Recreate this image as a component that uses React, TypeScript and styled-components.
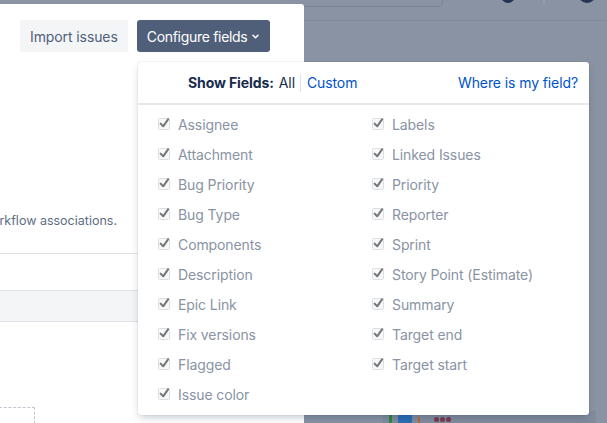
import React from "react";
import styled, { createGlobalStyle } from "styled-components";

const GlobalStyle = createGlobalStyle`
  html, body { margin: 0; padding: 0; }
  body {
    background: #8993a4;
    font-family: Inter, "Noto Sans", "Liberation Sans", sans-serif;
    -webkit-font-smoothing: antialiased;
  }
`;

const Page = styled.div`
  position: relative;
  width: 607px;
  height: 423px;
  overflow: hidden;
  display: grid;
  grid-template-columns: 304px 1fr;
  background: #8993a4;
`;

const LeftPanel = styled.section`
  margin-top: 4px;
  background: #ffffff;
  border-top-right-radius: 3px;
  display: flex;
  flex-direction: column;
  overflow: hidden;
  & > * {
    flex-shrink: 0;
  }
`;

const Toolbar = styled.div`
  display: flex;
  gap: 9px;
  padding: 16px 0 0 20px;
`;

const Button = styled.button<{ $primary?: boolean }>`
  height: 32px;
  padding: 0 10px;
  border: none;
  border-radius: 3px;
  display: inline-flex;
  align-items: center;
  gap: 4px;
  font-family: inherit;
  font-size: 14px;
  letter-spacing: ${(p) => (p.$primary ? "-0.3px" : "-0.1px")};
  background: ${(p) => (p.$primary ? "#505f79" : "#f4f5f7")};
  color: ${(p) => (p.$primary ? "#ffffff" : "#505f79")};
`;

const Description = styled.p`
  margin: 161px 0 0 0;
  width: 117px;
  display: flex;
  justify-content: flex-end;
  font-size: 12.5px;
  line-height: 16px;
  color: #5e6c84;
  white-space: nowrap;
`;

const Divider = styled.div`
  margin-top: 24px;
  height: 1px;
  background: #dfe1e6;
`;

const Spacer = styled.div<{ $h: number }>`
  height: ${(p) => p.$h}px;
`;

const GrayRow = styled.div`
  height: 30px;
  background: #f4f5f7;
  border-top: 1px solid #dfe1e6;
  border-bottom: 1px solid #dfe1e6;
`;

const DashedBox = styled.div`
  width: 35px;
  height: 30px;
  margin-left: -1px;
  border-top: 1px dashed #c1c7d0;
  border-right: 1px dashed #c1c7d0;
`;

const RightArea = styled.div`
  display: flex;
  flex-direction: column;
`;

const TopBar = styled.div`
  height: 20px;
  border-bottom: 1px solid #7f899b;
  display: flex;
  align-items: flex-start;
`;

const SearchStub = styled.div`
  width: 138px;
  height: 6px;
  border-right: 1px solid #7c8597;
  border-bottom: 1px solid #7c8597;
  border-bottom-right-radius: 5px;
`;

const Avatar = styled.div<{ $ml: number; $size: number }>`
  margin-left: ${(p) => p.$ml}px;
  margin-top: ${(p) => -p.$size + 3}px;
  width: ${(p) => p.$size}px;
  height: ${(p) => p.$size}px;
  border-radius: 50%;
  background: #243454;
`;

const Tick = styled.div`
  margin-left: 28px;
  width: 2px;
  height: 3px;
  background: #9aa1ad;
`;

const Board = styled.div`
  flex: 1;
  display: flex;
  flex-direction: column;
  justify-content: flex-end;
  padding-left: 79px;
`;

const BoardStrip = styled.div`
  height: 12px;
  width: 207px;
  background: #828c9e;
  display: flex;
  align-items: flex-end;
  gap: 6px;
  padding-left: 6px;
`;

const Bar = styled.div<{ $c: string; $w: number; $h: number }>`
  width: ${(p) => p.$w}px;
  height: ${(p) => p.$h}px;
  background: ${(p) => p.$c};
  border-radius: 1px;
`;

const Dots = styled.div`
  display: flex;
  gap: 1px;
  margin-left: 8px;
  margin-bottom: 1px;
  span {
    width: 5px;
    height: 5px;
    border-radius: 50%;
    background: #7d3a4c;
  }
`;

const Dropdown = styled.div`
  position: absolute;
  left: 138px;
  top: 62px;
  width: 451px;
  height: 353px;
  background: #ffffff;
  border-radius: 3px;
  box-shadow: 0 4px 8px -2px rgba(9, 30, 66, 0.25), 0 0 1px rgba(9, 30, 66, 0.31);
  display: flex;
  flex-direction: column;
`;

const DropHeader = styled.div`
  height: 41px;
  border-bottom: 2px solid #e6e8ec;
  display: flex;
  align-items: center;
  padding: 0 11px 0 50px;
  font-size: 14px;
  letter-spacing: -0.1px;
  color: #172b4d;
`;

const Strong = styled.span`
  font-weight: 700;
  margin-right: 5px;
`;

const Sep = styled.span`
  width: 1px;
  height: 18px;
  background: #dfe1e6;
  margin: 0 6px 0 5px;
`;

const Link = styled.a`
  color: #0052cc;
  text-decoration: none;
`;

const Grow = styled.div`
  flex: 1;
`;

const FieldGrid = styled.div`
  display: grid;
  grid-auto-flow: column;
  grid-template-rows: repeat(10, 30px);
  grid-template-columns: 214px 1fr;
  padding: 4px 0 0 20px;
`;

const Field = styled.label`
  display: flex;
  align-items: center;
  gap: 7px;
  font-size: 14px;
  letter-spacing: -0.1px;
  color: #8993a4;
`;

const CheckIcon = () => (
  <svg width="13" height="13" viewBox="0 0 13 13" style={{ flex: "none", marginTop: -2 }}>
    <rect x="0.5" y="1.5" width="11" height="11" rx="1" fill="#f7f8f9" stroke="#dcdfe4" />
    <path d="M2.6 6.6 L5.2 9.3 L10.2 2.2" fill="none" stroke="#767676" strokeWidth="2" strokeLinecap="round" strokeLinejoin="round" />
  </svg>
);

const Chevron = () => (
  <svg width="9" height="9" viewBox="0 0 9 9">
    <path d="M2 3.3 L4.5 5.8 L7 3.3" fill="none" stroke="#ffffff" strokeWidth="1.5" strokeLinecap="round" strokeLinejoin="round" />
  </svg>
);

const left = [
  "Assignee",
  "Attachment",
  "Bug Priority",
  "Bug Type",
  "Components",
  "Description",
  "Epic Link",
  "Fix versions",
  "Flagged",
  "Issue color",
];
const right = [
  "Labels",
  "Linked Issues",
  "Priority",
  "Reporter",
  "Sprint",
  "Story Point (Estimate)",
  "Summary",
  "Target end",
  "Target start",
];

export default function App() {
  return (
    <>
      <GlobalStyle />
      <Page>
        <LeftPanel>
          <Toolbar>
            <Button>Import issues</Button>
            <Button $primary>
              Configure fields <Chevron />
            </Button>
          </Toolbar>
          <Description>
            <span>Issue types are managed through workflow associations.</span>
          </Description>
          <Divider />
          <Spacer $h={36} />
          <GrayRow />
          <Spacer $h={85} />
          <DashedBox />
        </LeftPanel>
        <RightArea>
          <TopBar>
            <SearchStub />
            <Avatar $ml={58} $size={14} />
            <Tick />
            <Avatar $ml={33} $size={18} />
          </TopBar>
          <Board>
            <BoardStrip>
              <Bar $c="#2f8a3c" $w={3} $h={10} />
              <Bar $c="#2a6fb4" $w={14} $h={8} />
              <Bar $c="#b86d2e" $w={2} $h={6} />
              <Dots>
                <span />
                <span />
                <span />
              </Dots>
            </BoardStrip>
          </Board>
        </RightArea>
        <Dropdown>
          <DropHeader>
            <Strong>Show Fields:</Strong>
            <span>All</span>
            <Sep />
            <Link href="#">Custom</Link>
            <Grow />
            <Link href="#">Where is my field?</Link>
          </DropHeader>
          <FieldGrid>
            {left.map((f) => (
              <Field key={f}>
                <CheckIcon />
                {f}
              </Field>
            ))}
            {right.map((f) => (
              <Field key={f}>
                <CheckIcon />
                {f}
              </Field>
            ))}
          </FieldGrid>
        </Dropdown>
      </Page>
    </>
  );
}
